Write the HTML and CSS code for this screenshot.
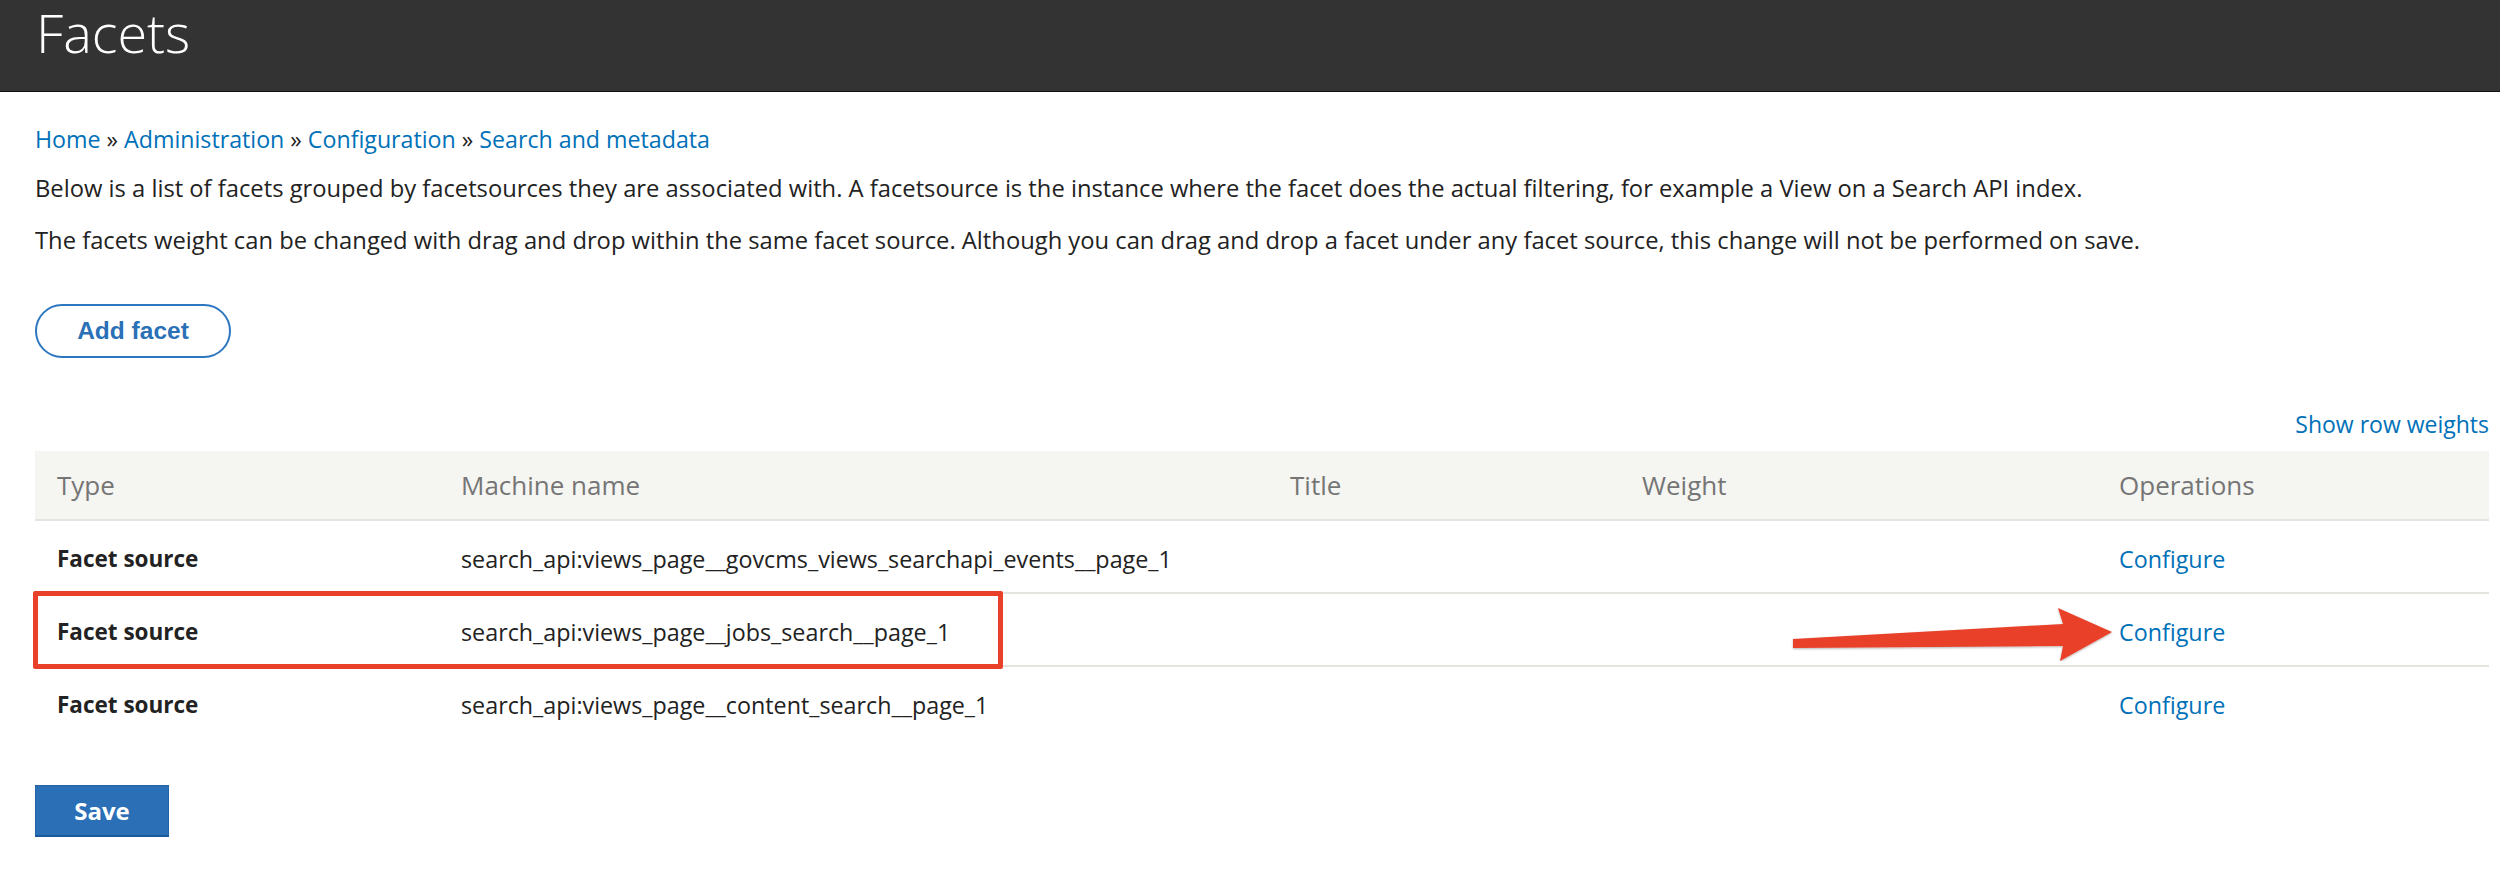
FILE: index.html
```html
<!DOCTYPE html>
<html>
<head>
<meta charset="utf-8">
<link rel="stylesheet" href="styles.css">
</head>
<body>
<header class="page-head">
  <h1 class="page-title">Facets</h1>
</header>
<main class="content">
  <nav class="breadcrumb">
    <a href="#">Home</a> » <a href="#">Administration</a> » <a href="#">Configuration</a> » <a href="#">Search and metadata</a>
  </nav>
  <p class="intro first">Below is a list of facets grouped by facetsources they are associated with. A facetsource is the instance where the facet does the actual filtering, for example a View on a Search API index.</p>
  <p class="intro">The facets weight can be changed with drag and drop within the same facet source. Although you can drag and drop a facet under any facet source, this change will not be performed on save.</p>
  <div class="actions">
    <a class="btn-add" href="#">Add facet</a>
  </div>
  <div class="weights-toggle"><a href="#">Show row weights</a></div>
  <div class="table-wrap">
    <table class="facets">
      <thead>
        <tr>
          <th class="c-type">Type</th>
          <th class="c-machine">Machine name</th>
          <th class="c-title">Title</th>
          <th class="c-weight">Weight</th>
          <th class="c-ops">Operations</th>
        </tr>
      </thead>
      <tbody>
        <tr>
          <td class="type">Facet source</td>
          <td>search_api:views_page__govcms_views_searchapi_events__page_1</td>
          <td></td>
          <td></td>
          <td><a href="#">Configure</a></td>
        </tr>
        <tr>
          <td class="type">Facet source</td>
          <td>search_api:views_page__jobs_search__page_1</td>
          <td></td>
          <td></td>
          <td><a href="#">Configure</a></td>
        </tr>
        <tr>
          <td class="type">Facet source</td>
          <td>search_api:views_page__content_search__page_1</td>
          <td></td>
          <td></td>
          <td><a href="#">Configure</a></td>
        </tr>
      </tbody>
    </table>
    <div class="highlight"></div>
    <svg class="arrow" width="340" height="70" viewBox="0 0 340 70">
      <defs>
        <filter id="sh" x="-10%" y="-30%" width="120%" height="160%">
          <feDropShadow dx="0" dy="1" stdDeviation="1.2" flood-color="#000" flood-opacity="0.3"/>
        </filter>
      </defs>
      <polygon filter="url(#sh)" fill="#e9402a" points="13,48 283,33 278,17 332,41 280,70 283,55 13,57"/>
    </svg>
  </div>
  <div class="form-actions">
    <button class="btn-save" type="button">Save</button>
  </div>
</main>
</body>
</html>
```
FILE: styles.css
```css
html, body {
  margin: 0;
  padding: 0;
  background: #fff;
}
body {
  font-family: "Open Sans", "Liberation Sans", sans-serif;
  color: #222;
}
a {
  color: #0071b8;
  text-decoration: none;
}
.page-head {
  height: 92px;
  background: #333;
  border-bottom: 1px solid #111;
  padding: 2px 0 0 36px;
  box-sizing: border-box;
}
.page-title {
  margin: 0;
  font-weight: 300;
  font-size: 54px;
  line-height: 60px;
  color: #fff;
}
.content {
  padding: 0 11px 0 35px;
}
.breadcrumb {
  margin-top: 31px;
  font-size: 23.2px;
  line-height: 32px;
  color: #222;
}
.intro {
  margin: 18px 0 0;
  font-size: 23.75px;
  line-height: 34px;
}
.intro.first {
  margin-top: 16px;
}
.actions {
  margin-top: 47px;
  display: flex;
}
.btn-add {
  display: inline-flex;
  align-items: center;
  justify-content: center;
  box-sizing: border-box;
  width: 196px;
  height: 54px;
  border: 2.5px solid #2d77c0;
  border-radius: 28px;
  font-family: "Liberation Sans", Arial, sans-serif;
  font-weight: 700;
  font-size: 24.5px;
  color: #2a70b6;
}
.weights-toggle {
  margin-top: 50px;
  text-align: right;
  font-size: 23px;
  line-height: 32px;
}
.table-wrap {
  position: relative;
  margin-top: 11px;
}
.facets {
  width: 100%;
  border-collapse: collapse;
  table-layout: fixed;
}
.facets th {
  background: #f5f5f2;
  padding: 17px 22px;
  line-height: 34px;
  text-align: left;
  font-weight: 400;
  font-size: 26px;
  color: #757575;
  border-bottom: 2px solid #e6e4df;
}
.facets td {
  padding: 22px 22px 17px;
  line-height: 32px;
  font-size: 23.3px;
  border-bottom: 2px solid #e6e4df;
  white-space: nowrap;
}
.facets tbody tr:last-child td {
  border-bottom: none;
}
.facets td.type {
  font-weight: 700;
  font-size: 22.5px;
}
.c-type { width: 360px; }
.c-machine { width: 785px; }
.c-title { width: 308px; }
.c-weight { width: 433px; }
.c-ops { width: auto; }
.highlight {
  position: absolute;
  left: -2px;
  top: 140px;
  width: 970px;
  height: 78px;
  border: 5px solid #e9402a;
  box-sizing: border-box;
  border-radius: 2px;
}
.arrow {
  position: absolute;
  left: 1745px;
  top: 140px;
}
.form-actions {
  margin-top: 47px;
}
.btn-save {
  width: 134px;
  height: 52px;
  background: #2b6fb6;
  border: 1px solid #2463a8;
  border-bottom: 2px solid #1a5a9c;
  border-radius: 0;
  color: #fff;
  font-family: "Open Sans", sans-serif;
  font-weight: 700;
  font-size: 24px;
  padding: 0;
}
```
